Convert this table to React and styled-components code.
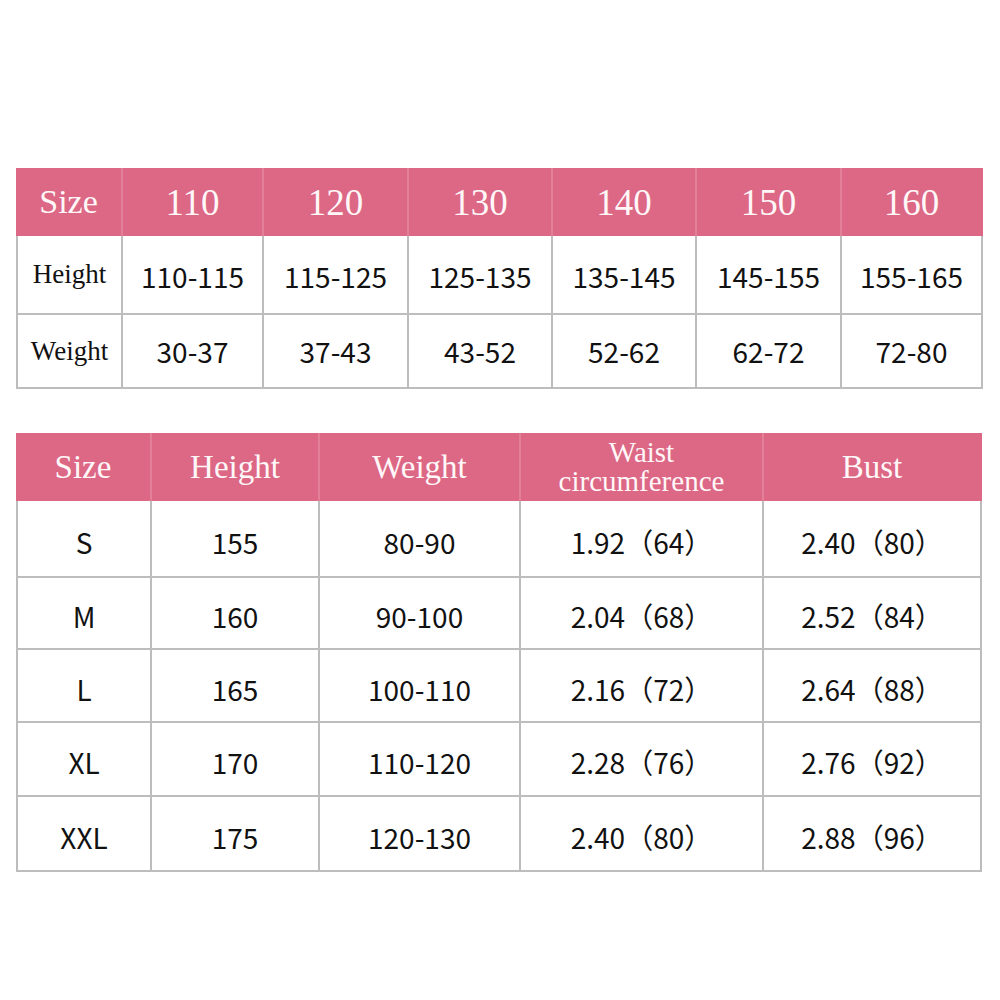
import React from 'react'
import styled, { createGlobalStyle } from 'styled-components'

const GlobalStyle = createGlobalStyle`
  html, body {
    margin: 0;
    padding: 0;
    background: #fff;
  }
`

const Page = styled.div`
  width: 1000px;
  height: 1000px;
  box-sizing: border-box;
  padding: 168px 0 0 16px;
  display: flex;
  flex-direction: column;
  gap: 44px;
`

const Grid = styled.div`
  display: grid;
  grid-template-columns: ${p => p.$cols};
  grid-template-rows: ${p => p.$rows};
  width: max-content;
`

const HeadCell = styled.div`
  background: #dc6886;
  color: #fff7f8;
  font-family: "Liberation Serif", "DejaVu Serif", serif;
  font-size: ${p => p.$size || 33}px;
  line-height: ${p => p.$small ? '29px' : '36px'};
  display: flex;
  align-items: center;
  justify-content: center;
  text-align: center;
  box-sizing: border-box;
  border-right: 2px solid ${p => p.$last ? '#dc6886' : '#e27f99'};
  padding-top: ${p => p.$drop || 0}px;
`

const Cell = styled.div`
  display: flex;
  align-items: center;
  justify-content: center;
  box-sizing: border-box;
  border-right: 2px solid #bdbdbd;
  border-bottom: 2px solid #bdbdbd;
  border-left: ${p => p.$first ? '2px solid #bdbdbd' : 'none'};
  color: #111;
  font-family: ${p => p.$serif
    ? '"Liberation Serif", "DejaVu Serif", serif'
    : '"Noto Sans CJK SC", "Noto Sans", sans-serif'};
  font-size: ${p => p.$serif ? '27px' : '28px'};
  padding-top: ${p => p.$drop || 0}px;
  white-space: pre;
`

const ages = ['110', '120', '130', '140', '150', '160']
const heights = ['110-115', '115-125', '125-135', '135-145', '145-155', '155-165']
const weights = ['30-37', '37-43', '43-52', '52-62', '62-72', '72-80']

const adult = [
  ['S', '155', '80-90', '1.92（64）', '2.40（80）'],
  ['M', '160', '90-100', '2.04（68）', '2.52（84）'],
  ['L', '165', '100-110', '2.16（72）', '2.64（88）'],
  ['XL', '170', '110-120', '2.28（76）', '2.76（92）'],
  ['XXL', '175', '120-130', '2.40（80）', '2.88（96）'],
]

export default function App() {
  return (
    <Page>
      <GlobalStyle />
      <Grid $cols="107px 141px 145px 144px 144px 145px 141px" $rows="68px 79px 74px">
        <HeadCell $size={34}>Size</HeadCell>
        {ages.map((a, i) => (
          <HeadCell key={a} $size={37} $drop={2} $last={i === ages.length - 1}>{a}</HeadCell>
        ))}
        <Cell $first $serif>Height</Cell>
        {heights.map(h => <Cell key={h} $drop={2}>{h}</Cell>)}
        <Cell $first $serif>Weight</Cell>
        {weights.map(w => <Cell key={w}>{w}</Cell>)}
      </Grid>

      <Grid $cols="136px 168px 201px 243px 218px" $rows="68px 77px 72px 73px 74px 75px">
        <HeadCell>Size</HeadCell>
        <HeadCell>Height</HeadCell>
        <HeadCell>Weight</HeadCell>
        <HeadCell $small $size={29}>Waist<br />circumference</HeadCell>
        <HeadCell $last>Bust</HeadCell>
        {adult.map(row => row.map((v, i) => (
          <Cell key={row[0] + i} $first={i === 0} $drop={6}>{v}</Cell>
        )))}
      </Grid>
    </Page>
  )
}
